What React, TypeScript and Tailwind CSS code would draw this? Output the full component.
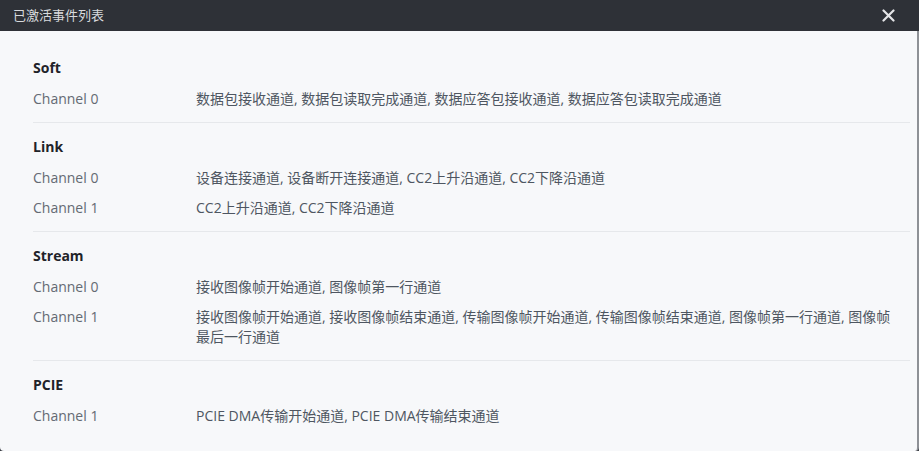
import React from "react";

type Row = { label: string; value: string };
type Section = { title: string; rows: Row[] };

const sections: Section[] = [
  {
    title: "Soft",
    rows: [
      {
        label: "Channel 0",
        value: "数据包接收通道, 数据包读取完成通道, 数据应答包接收通道, 数据应答包读取完成通道",
      },
    ],
  },
  {
    title: "Link",
    rows: [
      { label: "Channel 0", value: "设备连接通道, 设备断开连接通道, CC2上升沿通道, CC2下降沿通道" },
      { label: "Channel 1", value: "CC2上升沿通道, CC2下降沿通道" },
    ],
  },
  {
    title: "Stream",
    rows: [
      { label: "Channel 0", value: "接收图像帧开始通道, 图像帧第一行通道" },
      {
        label: "Channel 1",
        value:
          "接收图像帧开始通道, 接收图像帧结束通道, 传输图像帧开始通道, 传输图像帧结束通道, 图像帧第一行通道, 图像帧最后一行通道",
      },
    ],
  },
  {
    title: "PCIE",
    rows: [{ label: "Channel 1", value: "PCIE DMA传输开始通道, PCIE DMA传输结束通道" }],
  },
];

export default function App() {
  return (
    <div
      className="w-[919px] h-[451px] bg-[#3a3d43] flex flex-col overflow-hidden"
      style={{ fontFamily: '"Open Sans", "Noto Sans CJK SC", sans-serif' }}
    >
      <div className="h-[31px] shrink-0 bg-[#2e3137] flex items-center justify-between pl-[13px] pr-[24px]">
        <span className="text-[13px] text-[#d8dadd]">已激活事件列表</span>
        <svg width="13" height="13" viewBox="0 0 13 13" className="text-[#e4e5e7]">
          <path d="M1.5 1.5 L11.5 11.5 M11.5 1.5 L1.5 11.5" stroke="currentColor" strokeWidth="2.2" strokeLinecap="round" />
        </svg>
      </div>
      <div className="flex-1 bg-[#f7f8fa] rounded-b-[4px] border-r-2 border-[#8e9196] pl-[33px] pr-[7px] pt-[13px]">
        {sections.map((s, i) => (
          <div
            key={s.title}
            className={`flex flex-col gap-[10px] pt-[13px] pb-[13px] ${i < sections.length - 1 ? "border-b border-[#e6e8eb]" : ""}`}
          >
            <div className="text-[14px] leading-[22px] font-bold text-[#1f2329]">{s.title}</div>
            {s.rows.map((r) => (
              <div key={r.label} className="flex text-[14px] leading-[20px]">
                <div className="w-[163px] shrink-0 text-[#646a73]">{r.label}</div>
                <div className="flex-1 pr-[14px] text-[#4e5661]">{r.value}</div>
              </div>
            ))}
          </div>
        ))}
      </div>
    </div>
  );
}
